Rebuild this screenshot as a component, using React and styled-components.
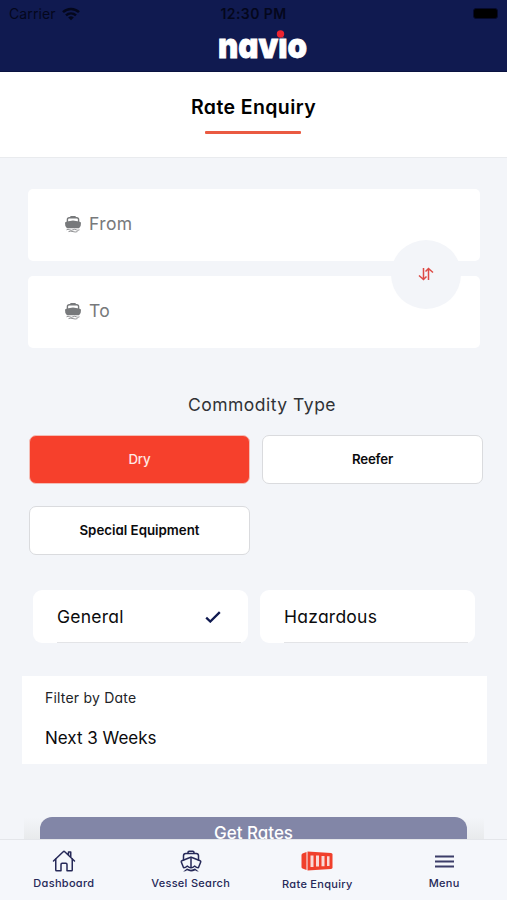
import React from "react";
import styled, { createGlobalStyle } from "styled-components";
import { IoBoatOutline, IoHomeOutline } from "react-icons/io5";

const GlobalStyle = createGlobalStyle`
  * {
    box-sizing: border-box;
  }
  body {
    margin: 0;
    background: #f3f5f9;
    font-family: Inter, "Open Sans", sans-serif;
    font-feature-settings: "cv11";
    color: #0b0b0d;
  }
  button {
    font-family: inherit;
    font-feature-settings: inherit;
    color: inherit;
    border: 0;
    padding: 0;
    background: none;
  }
`;

const Screen = styled.div`
  width: 507px;
  height: 900px;
  display: flex;
  flex-direction: column;
  overflow: hidden;
`;

const Header = styled.header`
  height: 72px;
  flex: none;
  background: #101a50;
  border-bottom: 1px solid #0a1240;
`;

const StatusBar = styled.div`
  height: 28px;
  display: grid;
  grid-template-columns: 1fr auto 1fr;
  align-items: center;
  padding: 0 9px 1px 9px;
  font-size: 14px;
  font-feature-settings: normal;
  color: #04071c;
`;

const Carrier = styled.div`
  display: flex;
  align-items: center;
  gap: 6px;
  letter-spacing: 0.1px;
`;

const Clock = styled.span`
  font-weight: 600;
  letter-spacing: 0.4px;
`;

const Battery = styled.span`
  justify-self: end;
  width: 25px;
  height: 11px;
  border-radius: 3px;
  background: #000;
  border: 1px solid #060a2b;
`;

const Logo = styled.svg`
  display: block;
  margin: 0 auto;
  width: 120px;
  height: 36px;
`;

const TitleBar = styled.div`
  height: 86px;
  flex: none;
  display: flex;
  flex-direction: column;
  align-items: center;
  background: #fff;
  border-bottom: 1px solid #e9ebee;
`;

const Title = styled.h1`
  margin: 23px 0 0;
  font-size: 19.5px;
  line-height: 24px;
  font-weight: 600;
  letter-spacing: 0.4px;
  color: #000;

  &::after {
    content: "";
    display: block;
    width: 96px;
    height: 3px;
    margin: 12px auto 0;
    border-radius: 1px;
    background: #ea5a41;
  }
`;

const Content = styled.main`
  flex: 1;
  min-height: 0;
  overflow: hidden;
`;

const Ports = styled.div`
  position: relative;
  display: flex;
  flex-direction: column;
  gap: 15px;
  margin: 31px 27px 0 28px;
`;

const PortField = styled.div`
  height: 72px;
  display: flex;
  align-items: center;
  gap: 7px;
  padding: 0 0 3px 36px;
  border-radius: 5px;
  background: #fff;
  color: #77797b;
  font-size: 17.5px;
  letter-spacing: 0.4px;
`;

const SwapButton = styled.button`
  position: absolute;
  right: 19px;
  top: 51px;
  width: 70px;
  height: 69px;
  display: flex;
  align-items: center;
  justify-content: center;
  padding-bottom: 2px;
  border-radius: 50%;
  background: #f3f5f9;
`;

const SectionTitle = styled.h2`
  margin: 45px 0 0 17px;
  text-align: center;
  font-size: 17.5px;
  line-height: 24px;
  font-weight: 400;
  letter-spacing: 0.5px;
  color: #303236;
`;

const Types = styled.div`
  display: grid;
  grid-template-columns: 221px 221px;
  gap: 22px 12px;
  margin: 18px 0 0 29px;
`;

const TypeButton = styled.button`
  height: 49px;
  padding-bottom: 2px;
  border: ${({ $active }) => ($active ? "1px solid #f3bdb6" : "1.5px solid #dadbde")};
  border-radius: 7px;
  background: ${({ $active }) => ($active ? "#f6402c" : "#fff")};
  color: ${({ $active }) => ($active ? "#ffe9e5" : "#0b0b0d")};
  font-size: 13.3px;
  font-weight: ${({ $active }) => ($active ? 500 : 600)};
  letter-spacing: ${({ $spacing }) => $spacing || "-0.15px"};
`;

const Classes = styled.div`
  display: grid;
  grid-template-columns: 215px 215px;
  gap: 12px;
  margin: 35px 0 0 33px;
`;

const ClassOption = styled.div`
  height: 53px;
  display: flex;
  justify-content: space-between;
  padding-left: 24px;
  border-radius: 9px;
  background: #fff;
  font-size: 17.5px;
  letter-spacing: 0.25px;
`;

const ClassLabel = styled.div`
  flex: 1;
  display: flex;
  align-items: center;
  justify-content: space-between;
  margin-right: 7px;
  padding-right: 20px;
  border-bottom: 1px solid #e3e4e7;
`;

const DateFilter = styled.div`
  height: 88px;
  margin: 33px 20px 0 22px;
  padding: 12px 23px;
  background: #fff;
`;

const FilterLabel = styled.div`
  font-size: 14px;
  line-height: 20px;
  letter-spacing: 0.2px;
  color: #222428;
`;

const FilterValue = styled.div`
  margin-top: 18px;
  font-size: 17px;
  line-height: 24px;
`;

const SubmitArea = styled.div`
  margin: 53px 23px 0 24px;
  padding: 0 16px;
  background: linear-gradient(#f3f5f9, #e7e9eb 24px);
`;

const SubmitButton = styled.button`
  display: block;
  width: 427px;
  height: 48px;
  padding-bottom: 17px;
  border-radius: 12px 12px 0 0;
  background: #8286a7;
  color: #fff;
  font-size: 17px;
  font-weight: 500;
`;

const TabBar = styled.nav`
  height: 61px;
  flex: none;
  display: grid;
  grid-template-columns: repeat(4, 1fr);
  background: #f5f7fb;
  border-top: 1px solid #e4e6ea;
`;

const Tab = styled.button`
  display: flex;
  flex-direction: column;
  align-items: center;
  padding: 8px 0 0 1px;
  font-size: 11px;
  font-weight: 500;
  letter-spacing: 0.3px;
  color: #262958;
`;

const TabIcon = styled.span`
  height: 26px;
  display: flex;
  align-items: center;
  font-size: 24px;
`;

const TabLabel = styled.span`
  line-height: 14px;
  margin-top: ${({ $low }) => ($low ? "3px" : "2px")};
`;

const WifiIcon = () => (
  <svg width="18" height="14" viewBox="0 0 18 14" fill="none" stroke="currentColor" strokeWidth="2.5">
    <path d="M1 5.2C5.5.8 12.5.8 17 5.2" />
    <path d="M4 8.4c2.9-2.7 7.1-2.7 10 0" />
    <path d="M9 13.3 6.2 10.5a4 4 0 0 1 5.6 0z" fill="currentColor" stroke="none" />
  </svg>
);

const FerryIcon = () => (
  <svg width="18" height="18" viewBox="0 0 18 18" fill="none" stroke="#77797b">
    <path d="M6 2.2Q6 1 7.2 1h3.6Q12 1 12 2.2z" fill="#77797b" stroke="none" />
    <path d="M3.4 7V4.600q0-1.900 1.900-1.900h7.400q1.900 0 1.900 1.900V7" strokeWidth="1.4" />
    <path d="M1 7.500 3 6.500 9 5.500l6 1L17 7.500q.3 3.600-1.900 5.700H2.900Q.7 11.100 1 7.500z" fill="#77797b" stroke="none" />
    <path d="M2.500 14.800q1.600-1 3.200 0t3.300 0 3.300 0 3.200 0M4.500 16.600q2.200-.8 4.500 0t4.500 0" strokeWidth=".8" />
  </svg>
);

const SwapIcon = () => (
  <svg width="16" height="14" viewBox="0 0 16 14" fill="none" stroke="#dd4a45" strokeWidth="1.5">
    <path d="M5.500 1v11.500M1 8.500l4.500 4L8.500 9.500M10.500 13V1.500M7.500 4.500l3-3 4.500 4" />
  </svg>
);

const CheckIcon = () => (
  <svg width="16" height="14" viewBox="0 0 16 14" fill="none" stroke="#101a50" strokeWidth="2.3">
    <path d="M1.2 8.700 5.300 12.500 14.800 3.100" />
  </svg>
);

const ContainerIcon = () => (
  <svg width="32" height="20" viewBox="0 0 32 20">
    <path d="M1.500 2.500 5.500 1v18l-4-1.500Q.5 17 .5 16V4q0-1 1-1.500z" fill="#f0402c" />
    <path d="M6.500.5 30 2q1.500.2 1.500 1.500v13q0 1.300-1.500 1.500L6.500 19.500z" fill="#f0402c" />
    <path d="M9.500 4.500h3v11.500h-3zM15 4.500h3v11h-3zM20.500 5h3v10.300h-3zM26 5.200h2.500V15H26z" fill="#f9dad7" />
  </svg>
);

const MenuIcon = () => (
  <svg width="19" height="13" viewBox="0 0 19 13" stroke="#3b3d68" strokeWidth="1.9">
    <path d="M0 1.500h19M0 6.500h19M0 11.500h19" />
  </svg>
);

const App = () => {
  return (
    <>
      <GlobalStyle />
      <Screen>
        <Header>
          <StatusBar>
            <Carrier>
              Carrier
              <WifiIcon />
            </Carrier>
            <Clock>12:30 PM</Clock>
            <Battery />
          </StatusBar>
          <Logo viewBox="0 0 120 36">
            <clipPath id="xheight">
              <rect x="0" y="9.5" width="120" height="27" />
            </clipPath>
            <text
              x="24"
              y="30"
              fill="#fff"
              stroke="#fff"
              strokeWidth="0.8"
              fontFamily="Inter"
              fontWeight="900"
              fontSize="35"
              textLength="89"
              lengthAdjust="spacingAndGlyphs"
              clipPath="url(#xheight)"
            >
              navio
            </text>
            <circle cx="86.5" cy="6" r="3.7" fill="#ee2430" />
          </Logo>
        </Header>
        <TitleBar>
          <Title>Rate Enquiry</Title>
        </TitleBar>
        <Content>
          <Ports>
            <PortField>
              <FerryIcon />
              From
            </PortField>
            <PortField>
              <FerryIcon />
              To
            </PortField>
            <SwapButton>
              <SwapIcon />
            </SwapButton>
          </Ports>
          <SectionTitle>Commodity Type</SectionTitle>
          <Types>
            <TypeButton $active>Dry</TypeButton>
            <TypeButton $spacing="-0.2px">Reefer</TypeButton>
            <TypeButton $spacing="0">Special Equipment</TypeButton>
          </Types>
          <Classes>
            <ClassOption>
              <ClassLabel>
                General
                <CheckIcon />
              </ClassLabel>
            </ClassOption>
            <ClassOption>
              <ClassLabel>Hazardous</ClassLabel>
            </ClassOption>
          </Classes>
          <DateFilter>
            <FilterLabel>Filter by Date</FilterLabel>
            <FilterValue>Next 3 Weeks</FilterValue>
          </DateFilter>
          <SubmitArea>
            <SubmitButton>Get Rates</SubmitButton>
          </SubmitArea>
        </Content>
        <TabBar>
          <Tab>
            <TabIcon>
              <IoHomeOutline />
            </TabIcon>
            <TabLabel>Dashboard</TabLabel>
          </Tab>
          <Tab>
            <TabIcon>
              <IoBoatOutline />
            </TabIcon>
            <TabLabel>Vessel Search</TabLabel>
          </Tab>
          <Tab>
            <TabIcon>
              <ContainerIcon />
            </TabIcon>
            <TabLabel $low>Rate Enquiry</TabLabel>
          </Tab>
          <Tab>
            <TabIcon>
              <MenuIcon />
            </TabIcon>
            <TabLabel>Menu</TabLabel>
          </Tab>
        </TabBar>
      </Screen>
    </>
  );
};
export default App;
